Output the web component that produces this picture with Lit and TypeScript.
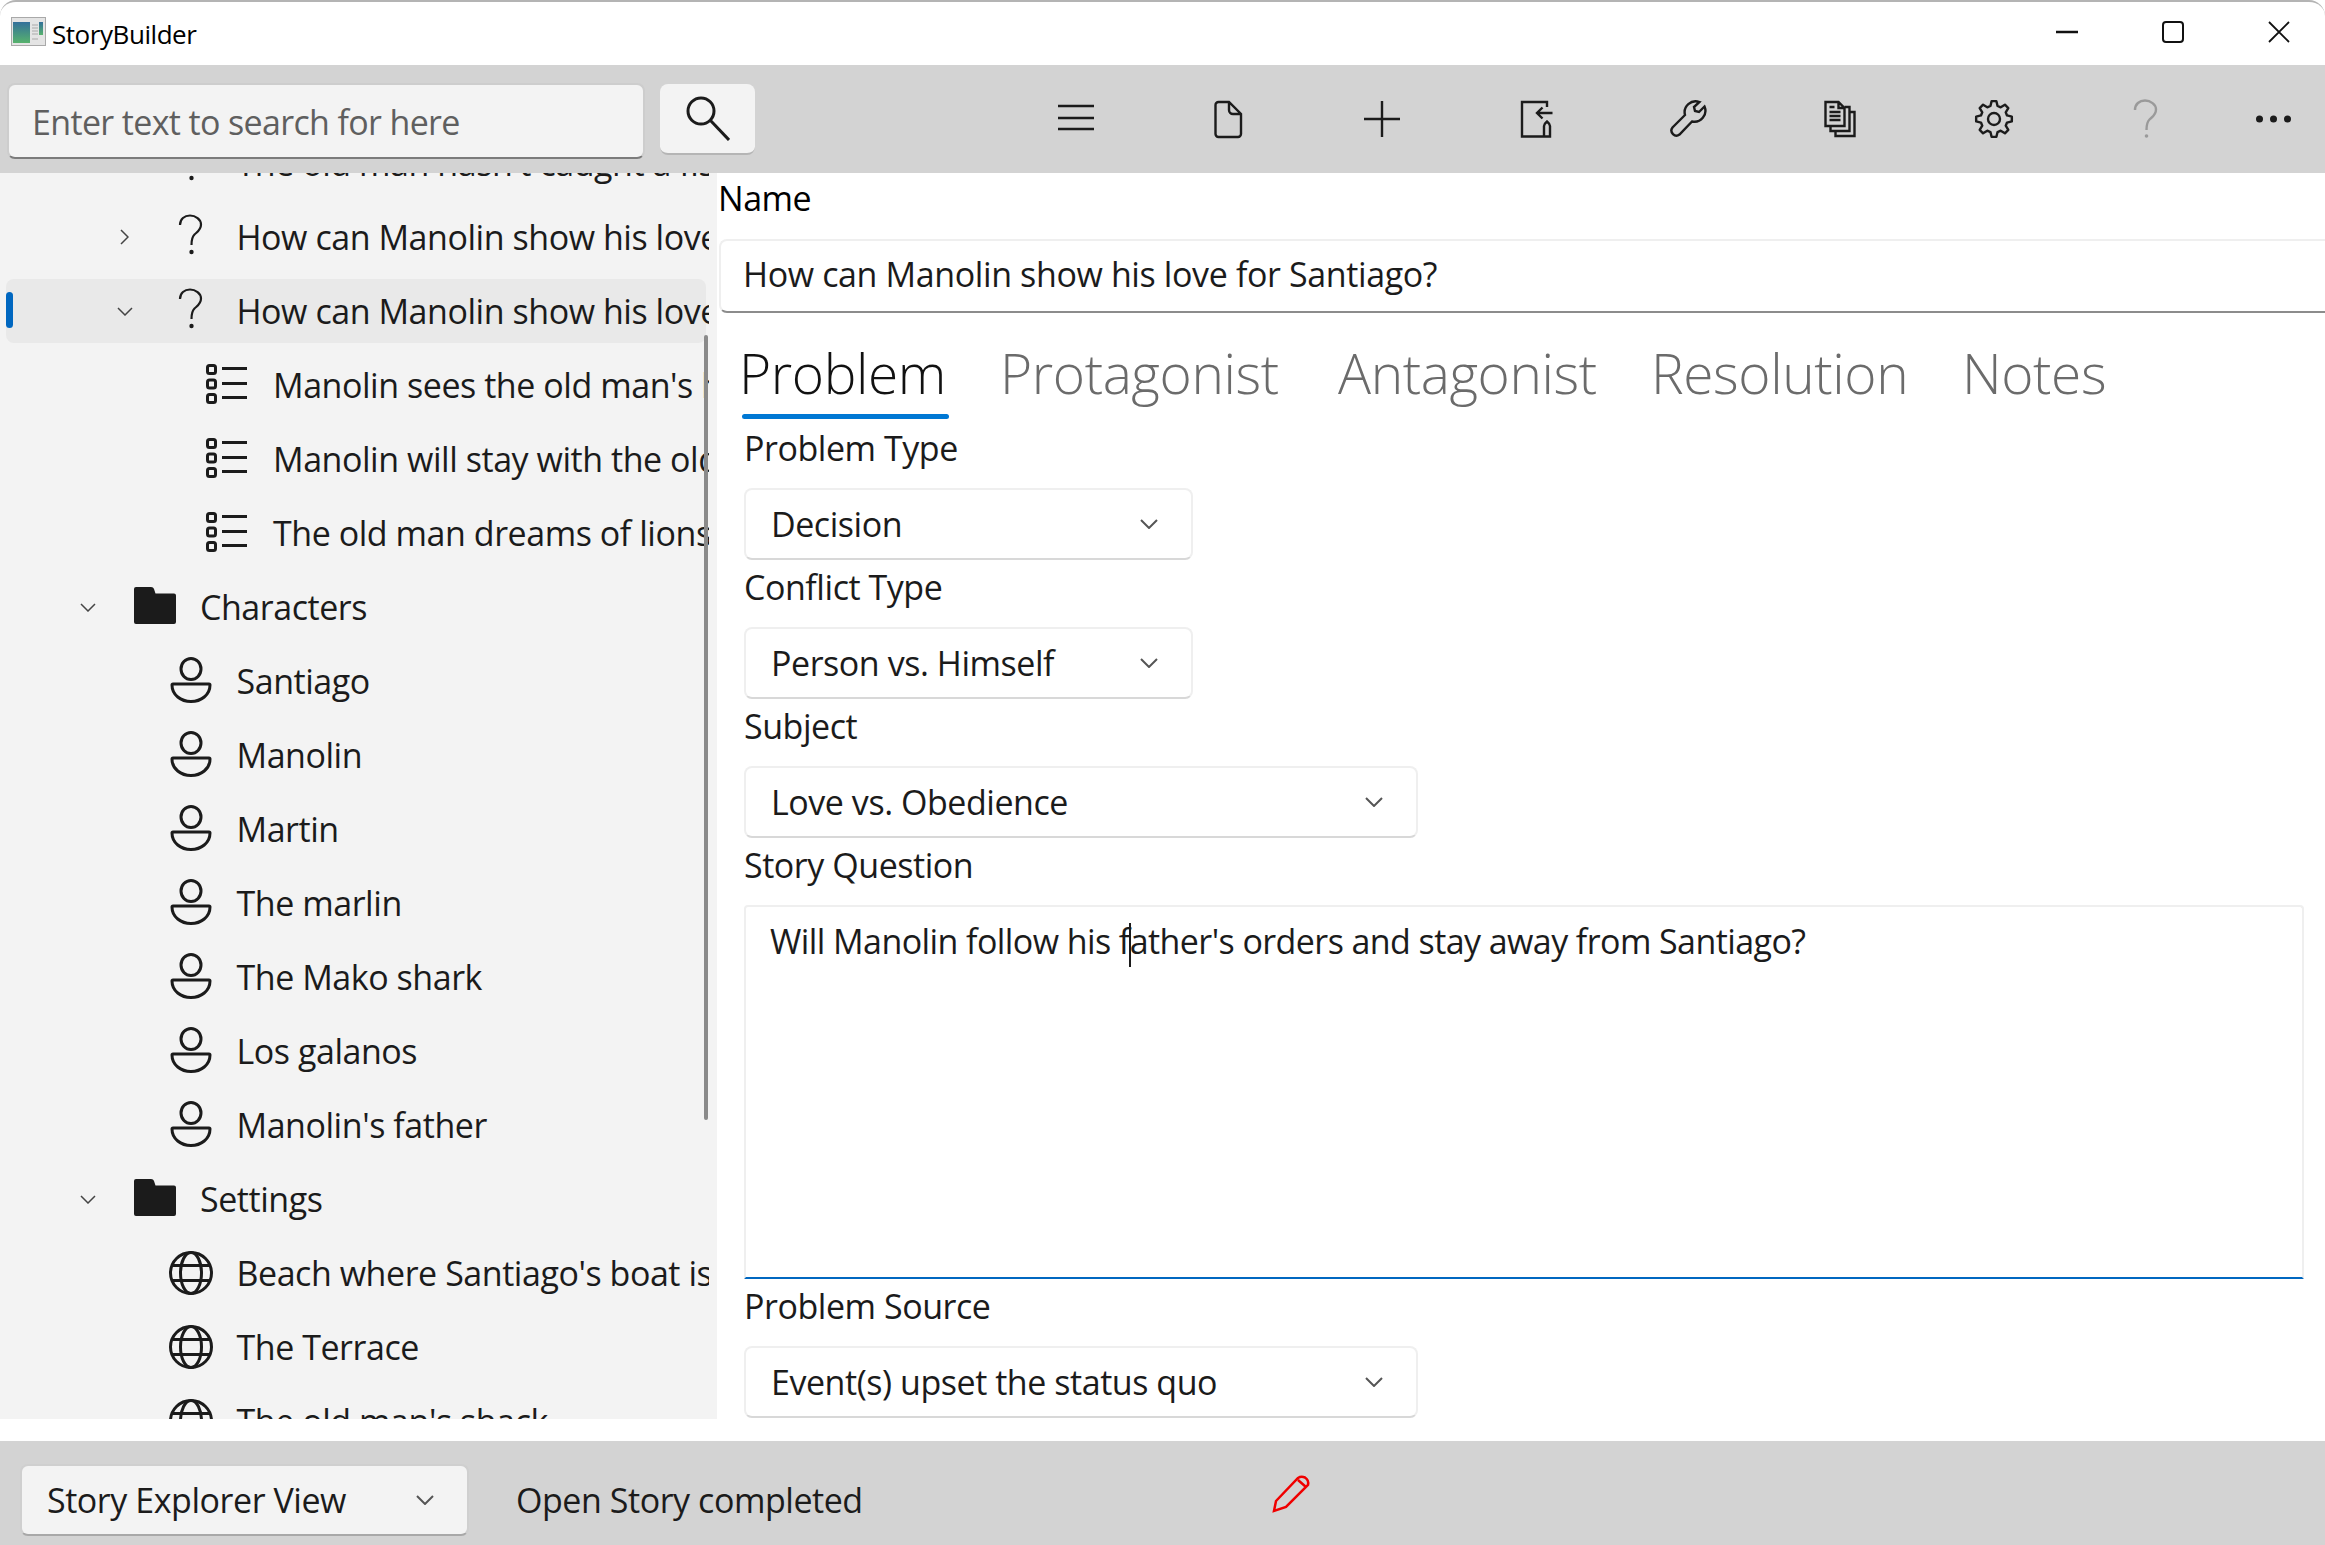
import { LitElement, css, html, svg } from "lit";
import { customElement } from "lit/decorators.js";

type Kind = "question" | "list" | "folder" | "person" | "globe";

interface TreeRow {
  kind: Kind;
  level: number;
  text: string;
  chevron?: "right" | "down";
  selected?: boolean;
}

const people = ["Santiago", "Manolin", "Martin", "The marlin", "The Mako shark", "Los galanos", "Manolin's father"];

const rows: TreeRow[] = [
  { kind: "question", level: 1, text: "The old man hasn't caught a fish in 84 days" },
  { kind: "question", level: 1, text: "How can Manolin show his love for Santiago?", chevron: "right" },
  { kind: "question", level: 1, text: "How can Manolin show his love for Santiago?", chevron: "down", selected: true },
  { kind: "list", level: 2, text: "Manolin sees the old man's hardship" },
  { kind: "list", level: 2, text: "Manolin will stay with the old man" },
  { kind: "list", level: 2, text: "The old man dreams of lions" },
  { kind: "folder", level: 0, text: "Characters", chevron: "down" },
  ...people.map((text): TreeRow => ({ kind: "person", level: 1, text })),
  { kind: "folder", level: 0, text: "Settings", chevron: "down" },
  { kind: "globe", level: 1, text: "Beach where Santiago's boat is kept" },
  { kind: "globe", level: 1, text: "The Terrace" },
  { kind: "globe", level: 1, text: "The old man's shack" },
];

const tabs = [
  { label: "Problem", width: 261 },
  { label: "Protagonist", width: 338 },
  { label: "Antagonist", width: 313 },
  { label: "Resolution", width: 311 },
  { label: "Notes", width: 150 },
];

function gearPath(cx: number, cy: number, outer: number, inner: number, teeth: number) {
  const step = (Math.PI * 2) / teeth;
  const pts: string[] = [];
  for (let i = 0; i < teeth; i++) {
    const a = i * step - Math.PI / 2;
    const corners: [number, number][] = [
      [a - step * 0.34, inner],
      [a - step * 0.17, outer],
      [a + step * 0.17, outer],
      [a + step * 0.34, inner],
    ];
    for (const [ang, r] of corners) {
      pts.push(`${(cx + Math.cos(ang) * r).toFixed(2)} ${(cy + Math.sin(ang) * r).toFixed(2)}`);
    }
  }
  return `M${pts.join("L")}Z`;
}

const chevronDown = html`<svg class="chev-down" viewBox="0 0 16 9"><path d="M1 1l7 7 7-7" /></svg>`;
const chevronRight = html`<svg class="chev-right" viewBox="0 0 9 16"><path d="M1 1l7 7-7 7" /></svg>`;
const comboChevron = html`<svg class="combo-chev" viewBox="0 0 18 10"><path d="M1 1l8 8 8-8" /></svg>`;

const treeIcons: Record<Kind, unknown> = {
  question: svg`<path class="ln2" d="M11 12C11 6 15.500 2.500 21 2.500S32 6.500 32 11.500C32 17 28 19 25.500 21.500C23 24 22.500 27 22.500 32" /><circle class="fill" cx="22.500" cy="39" r="2.200" />`,
  list: svg`<g class="ln3">
    <rect x="2.500" y="4.500" width="8" height="8" rx="2" /><rect x="2.500" y="19" width="8" height="8" rx="2" /><rect x="2.500" y="33.500" width="8" height="8" rx="2" />
    <path d="M17 7.500H42M17 22.500H42M17 36.500H42" /></g>`,
  folder: svg`<path class="fill" d="M2 6a2 2 0 0 1 2-2h15c1.500 0 2.500 .8 3 2l1.500 4.500h18.500a2 2 0 0 1 2 2V39a2 2 0 0 1-2 2H4a2 2 0 0 1-2-2Z" />`,
  person: svg`<g class="ln3"><ellipse cx="22" cy="12" rx="10" ry="10.500" /><path d="M4 27H40a1 1 0 0 1 1 1C41 38 32 44.500 22 44.500S3 38 3 28a1 1 0 0 1 1-1Z" /></g>`,
  globe: svg`<g class="ln3"><circle cx="22" cy="24" r="20.500" /><ellipse cx="22" cy="24" rx="10.500" ry="20.500" /><path d="M3 16.500H41M3 31.500H41" /></g>`,
};

const commandIcons = [
  svg`<path class="ln2" d="M2 7H38M2 19H38M2 30H38" />`,
  svg`<path class="ln2" d="M9.500 3H20L32 15V35a3 3 0 0 1-3 3H9.500a3 3 0 0 1-3-3V6a3 3 0 0 1 3-3ZM20 3V11a4 4 0 0 0 4 4H32" />`,
  svg`<path class="ln2" d="M2 20H38M20 2V38" />`,
  svg`<path class="ln2" d="M32 8V3H7V37.500H28M37.500 14H22M27.500 8.500L22 14L27.500 19.500M29 37.500V27Q29 25 32 22.500Q35 25 35 27V37.500Z" />`,
  svg`<path class="ln2" transform="translate(2 2)" d="M34.500 5.500L29 11L25 10L24 6L29.500 1A11 11 0 0 0 15 14L2.500 26.500A5 5 0 0 0 9.500 33.500L22 20.500A11 11 0 0 0 34.500 5.500Z" />`,
  svg`<g class="ln2" transform="translate(3.500 2)"><path d="M1 1H14L20 7V25H1ZM14 1V7H20M5 6H10M5 11H16M5 15H16M5 19H16" /><path d="M20 6H25V30H6V25M25 11H30V35H11V30" /></g>`,
  svg`<path class="ln2" stroke-linejoin="round" d="${gearPath(20, 20, 18, 13.5, 8)}" /><circle class="ln2" cx="20" cy="20" r="6" />`,
  svg`<path class="ln2 muted" d="M8 11C8 5 12.500 1.500 18 1.500S29 5.500 29 10.500C29 16 25 18 22.500 20.500C20 23 19.500 26 19.500 31" /><circle class="muted-fill" cx="19.500" cy="37" r="1.800" />`,
];

@customElement("app-root")
export class AppRoot extends LitElement {
  private renderRow(row: TreeRow) {
    const pad = 58 + row.level * 36.5;
    return html`
      <div class="row ${row.selected ? "selected" : ""}" style="padding-left:${pad}px">
        <span class="chev-slot">
          ${row.chevron === "right" ? chevronRight : row.chevron === "down" ? chevronDown : ""}
        </span>
        <svg class="tree-icon" viewBox="0 0 44 48">${treeIcons[row.kind]}</svg>
        <span class="row-text">${row.text}</span>
      </div>
    `;
  }

  private renderCombo(text: string, size: string) {
    return html`<div class="combo ${size}"><span>${text}</span>${comboChevron}</div>`;
  }

  render() {
    return html`
      <header class="title">
        <svg class="app-icon" viewBox="0 0 35 29">
          <defs>
            <linearGradient id="pane" x1="0" y1="0" x2="0" y2="1">
              <stop offset="0" stop-color="#33709a" />
              <stop offset="1" stop-color="#57b26d" />
            </linearGradient>
          </defs>
          <rect x=".5" y=".5" width="34" height="28" fill="#e4e4e4" stroke="#a9a9a9" />
          <rect x="2" y="5" width="17" height="21" fill="url(#pane)" />
          <rect x="28" y="5" width="4" height="13" fill="url(#pane)" />
          <path d="M21 8h6M21 11h6M21 14h6M21 17h6M21 22h6" stroke="#bdbdbd" stroke-width="1.500" />
        </svg>
        <span class="title-text">StoryBuilder</span>
        <div class="window-controls">
          <svg viewBox="0 0 40 40"><path d="M9 12H31" stroke-width="2.500" /></svg>
          <svg viewBox="0 0 40 40"><rect x="10" y="2" width="20" height="20" rx="3" stroke-width="2" /></svg>
          <svg viewBox="0 0 40 40"><path d="M10 2L30 22M30 2L10 22" stroke-width="1.800" /></svg>
        </div>
      </header>

      <section class="toolbar">
        <div class="search-box">Enter text to search for here</div>
        <div class="search-btn">
          <svg viewBox="0 0 44 45">
            <circle cx="15" cy="15" r="13" />
            <path d="M24.500 24.500L43 44" />
          </svg>
        </div>
        <div class="commands">
          ${commandIcons.map((icon) => html`<span class="command"><svg viewBox="0 0 40 40">${icon}</svg></span>`)}
          <span class="command more">
            <svg viewBox="0 0 40 40"><circle cx="5.500" cy="20" r="3.500" /><circle cx="19.500" cy="20" r="3.500" /><circle cx="33.500" cy="20" r="3.500" /></svg>
          </span>
        </div>
      </section>

      <main class="main">
        <aside class="nav">
          <div class="tree">${rows.map((row) => this.renderRow(row))}</div>
          <div class="scrollbar"></div>
        </aside>

        <div class="content">
          <div class="name-label">Name</div>
          <div class="name-input">How can Manolin show his love for Santiago?</div>

          <nav class="tabs">
            ${tabs.map(
              (tab, i) => html`<span class="tab ${i === 0 ? "active" : ""}" style="width:${tab.width}px">${tab.label}</span>`
            )}
          </nav>

          <div class="form">
            <label>Problem Type</label>
            ${this.renderCombo("Decision", "small")}
            <label>Conflict Type</label>
            ${this.renderCombo("Person vs. Himself", "small")}
            <label>Subject</label>
            ${this.renderCombo("Love vs. Obedience", "wide")}
            <label>Story Question</label>
            <div class="question">Will Manolin follow his f<span class="caret"></span>ather's orders and stay away from Santiago?</div>
            <label>Problem Source</label>
            ${this.renderCombo("Event(s) upset the status quo", "wide")}
          </div>
        </div>
      </main>

      <footer class="status">
        <div class="combo view"><span>Story Explorer View</span>${comboChevron}</div>
        <span class="status-text">Open Story completed</span>
        <svg class="pencil" viewBox="0 0 37 36">
          <path d="M4 25L26 2Q29 0 33 1.500Q37 4 36 9L14 31L2 35ZM26 4L34 11" />
        </svg>
      </footer>
    `;
  }

  static styles = css`
    :host {
      display: flex;
      flex-direction: column;
      height: 100vh;
      overflow: hidden;
      background: #fff;
      color: #1b1b1b;
      font-family: "Open Sans", "Liberation Sans", sans-serif;
      font-size: 34px;
      letter-spacing: -0.45px;
    }

    .title {
      flex: none;
      box-sizing: border-box;
      height: 65px;
      display: flex;
      align-items: center;
      border-top: 2px solid #b4b4b4;
      border-radius: 16px 16px 0 0;
      padding-left: 11px;
    }
    .app-icon {
      width: 35px;
      height: 29px;
      margin-right: 6px;
      margin-bottom: 4px;
    }
    .title-text {
      font-size: 26px;
      color: #000;
    }
    .window-controls {
      margin-left: auto;
      display: flex;
      gap: 66px;
      padding-right: 26px;
    }
    .window-controls svg {
      width: 40px;
      height: 40px;
      margin-top: 13px;
      fill: none;
      stroke: #111;
    }

    .toolbar {
      flex: none;
      height: 108px;
      background: #d3d3d3;
      display: flex;
      align-items: center;
    }
    .search-box {
      box-sizing: border-box;
      width: 638px;
      height: 76px;
      margin: 3px 0 0 7px;
      padding: 2px 0 0 23px;
      display: flex;
      align-items: center;
      background: #f3f3f3;
      border: 2px solid #cdcdcd;
      border-bottom: 2px solid #7b7b7b;
      border-radius: 8px;
      color: #5f5f5f;
      letter-spacing: -0.65px;
    }
    .search-btn {
      box-sizing: border-box;
      width: 95px;
      height: 71px;
      margin-left: 15px;
      display: flex;
      align-items: center;
      justify-content: center;
      background: #f3f3f3;
      border-radius: 8px;
      border-bottom: 2px solid #b5b5b5;
    }
    .search-btn svg {
      width: 44px;
      height: 45px;
      fill: none;
      stroke: #1b1b1b;
      stroke-width: 3;
    }
    .commands {
      margin-left: 244px;
      display: flex;
    }
    .command {
      width: 153px;
      display: flex;
      justify-content: center;
    }
    .command.more {
      width: 101px;
    }
    .command svg {
      width: 40px;
      height: 40px;
    }
    .command .ln2 {
      fill: none;
      stroke: #1b1b1b;
      stroke-width: 2.4;
    }
    .command .muted {
      stroke: #9a9a9a;
    }
    .command .muted-fill {
      fill: #9a9a9a;
    }
    .more svg {
      fill: #1b1b1b;
    }

    .main {
      flex: 1;
      min-height: 0;
      display: flex;
    }

    .nav {
      position: relative;
      flex: none;
      width: 717px;
      height: 1246px;
      background: #f3f3f3;
      overflow: hidden;
    }
    .tree {
      width: 709px;
      height: 100%;
      overflow: hidden;
    }
    .row {
      position: relative;
      box-sizing: border-box;
      width: 700px;
      height: 64px;
      margin: 0 0 10px 6px;
      display: flex;
      align-items: center;
      white-space: nowrap;
      border-radius: 8px;
    }
    .row:first-child {
      margin-top: -42px;
    }
    .row.selected {
      background: #e9e9e9;
    }
    .row.selected::before {
      content: "";
      position: absolute;
      left: 0;
      top: 13px;
      width: 7px;
      height: 36px;
      border-radius: 4px;
      background: #0067c0;
    }
    .chev-slot {
      flex: none;
      width: 48px;
      display: flex;
      justify-content: center;
    }
    .chev-down {
      width: 16px;
      height: 9px;
      fill: none;
      stroke: #444;
      stroke-width: 1.500;
    }
    .chev-right {
      width: 9px;
      height: 16px;
      fill: none;
      stroke: #444;
      stroke-width: 1.500;
    }
    .tree-icon {
      flex: none;
      width: 44px;
      height: 48px;
      margin-left: 20px;
      margin-right: 24px;
    }
    .tree-icon .ln2 {
      fill: none;
      stroke: #1b1b1b;
      stroke-width: 2.2;
    }
    .tree-icon .ln3 {
      fill: none;
      stroke: #1b1b1b;
      stroke-width: 3;
    }
    .tree-icon .fill {
      fill: #1b1b1b;
    }
    .row-text {
      flex: none;
    }
    .scrollbar {
      position: absolute;
      left: 704px;
      top: 162px;
      width: 4px;
      height: 785px;
      border-radius: 2px;
      background: #8a8a8a;
    }

    .content {
      flex: 1;
      min-width: 0;
    }
    .name-label {
      box-sizing: border-box;
      height: 66px;
      padding: 3px 0 0 1px;
      line-height: 44px;
      color: #000;
    }
    .name-input {
      box-sizing: border-box;
      height: 74px;
      margin-left: 2px;
      padding: 0 0 4px 22px;
      display: flex;
      align-items: center;
      border: 2px solid #efefef;
      border-right: none;
      border-bottom: 2px solid #8c8c8c;
      border-radius: 8px 0 0 8px;
      letter-spacing: -0.38px;
    }
    .tabs {
      height: 108px;
      padding-left: 22px;
      display: flex;
    }
    .tab {
      position: relative;
      flex: none;
      font-size: 55px;
      font-weight: 300;
      line-height: 120px;
      color: #6b6b6b;
      letter-spacing: -0.4px;
    }
    .tab.active {
      color: #111;
    }
    .tab.active::after {
      content: "";
      position: absolute;
      left: 3px;
      top: 101px;
      width: 207px;
      height: 5px;
      border-radius: 3px;
      background: #0078d4;
    }
    .form {
      padding: 0 21px 0 27px;
    }
    label {
      display: block;
      height: 67px;
      line-height: 54px;
    }
    .combo {
      box-sizing: border-box;
      height: 72px;
      padding: 0 33px 0 25px;
      display: flex;
      align-items: center;
      justify-content: space-between;
      background: #fff;
      border: 2px solid #efefef;
      border-bottom: 2px solid #d8d8d8;
      border-radius: 8px;
    }
    .combo.small {
      width: 449px;
    }
    .combo.wide {
      width: 674px;
    }
    .combo-chev {
      width: 18px;
      height: 10px;
      fill: none;
      stroke: #555;
      stroke-width: 2;
    }
    .question {
      box-sizing: border-box;
      height: 374px;
      padding: 11px 0 0 24px;
      line-height: 46px;
      border: 2px solid #efefef;
      border-bottom: 2px solid #0067c0;
      border-radius: 4px 4px 0 0;
      letter-spacing: -0.58px;
    }
    .caret {
      display: inline-block;
      width: 2px;
      height: 44px;
      margin: 0 -1px;
      vertical-align: middle;
      background: #1b1b1b;
    }

    .status {
      flex: none;
      box-sizing: border-box;
      height: 104px;
      padding-top: 14px;
      background: #d3d3d3;
      display: flex;
      align-items: center;
    }
    .combo.view {
      width: 449px;
      margin-left: 20px;
      background: #f3f3f3;
      border-color: #cfcfcf;
      border-bottom-color: #a8a8a8;
    }
    .status-text {
      margin-left: 47px;
    }
    .pencil {
      width: 37px;
      height: 36px;
      margin-left: 409px;
      margin-bottom: 12px;
      overflow: visible;
      fill: none;
      stroke: #f00000;
      stroke-width: 2.500;
    }
  `;
}

declare global {
  interface HTMLElementTagNameMap {
    "app-root": AppRoot;
  }
}
